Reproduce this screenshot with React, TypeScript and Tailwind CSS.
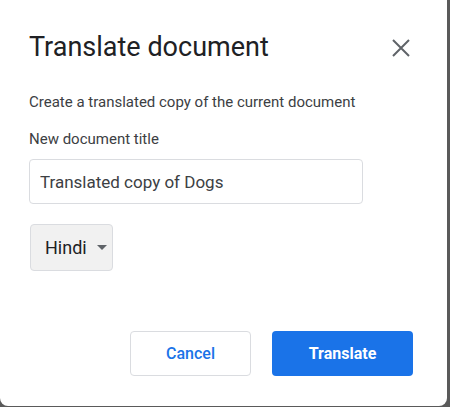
export default function App() {
  return (
    <div className="h-[407px] w-[450px] overflow-hidden bg-[#5a5a5a]" style={{ fontFamily: 'Roboto, Arial, sans-serif' }}>
      <div className="-mt-2 flex h-[414px] w-[447px] flex-col rounded-lg bg-white pl-[29px] pr-[34px]">
        {/* header */}
        <div className="mt-[39px] flex items-center justify-between">
          <h1 className="text-[27px] leading-8 text-[#202124]">Translate document</h1>
          <button className="mr-[1px] mt-[1px] text-[#5f6368]" aria-label="Close">
            <svg width="22" height="22" viewBox="0 0 22 22" fill="none" stroke="currentColor" strokeWidth="2">
              <path d="M3 3l16 16M19 3L3 19" />
            </svg>
          </button>
        </div>

        <p className="mt-[29px] text-[15px] leading-5 text-[#3c4043]">Create a translated copy of the current document</p>
        <label className="mt-[17px] text-[15px] leading-5 text-[#3c4043]">New document title</label>

        <input
          className="mt-[10px] h-[45px] w-[334px] rounded border border-[#dadce0] px-[10px] text-[17px] text-[#3c4043] outline-none"
          defaultValue="Translated copy of Dogs"
        />

        <button className="ml-[1px] mt-[20px] flex h-[47px] w-[83px] items-center gap-[10px] rounded border border-[#dadce0] bg-[#f1f1f1] pl-[14px] text-[18px] text-[#202124]">
          Hindi
          <span className="h-0 w-0 border-x-[5px] border-t-[5px] border-x-transparent border-t-[#5f6368]" />
        </button>

        <div className="mt-[60px] flex justify-end gap-[21px]">
          <button className="h-[45px] w-[121px] rounded border border-[#dadce0] bg-white text-[16px] font-medium text-[#1a73e8]">
            Cancel
          </button>
          <button className="h-[45px] w-[141px] rounded bg-[#1a73e8] text-[16px] font-bold text-white">
            Translate
          </button>
        </div>
      </div>
    </div>
  );
}
